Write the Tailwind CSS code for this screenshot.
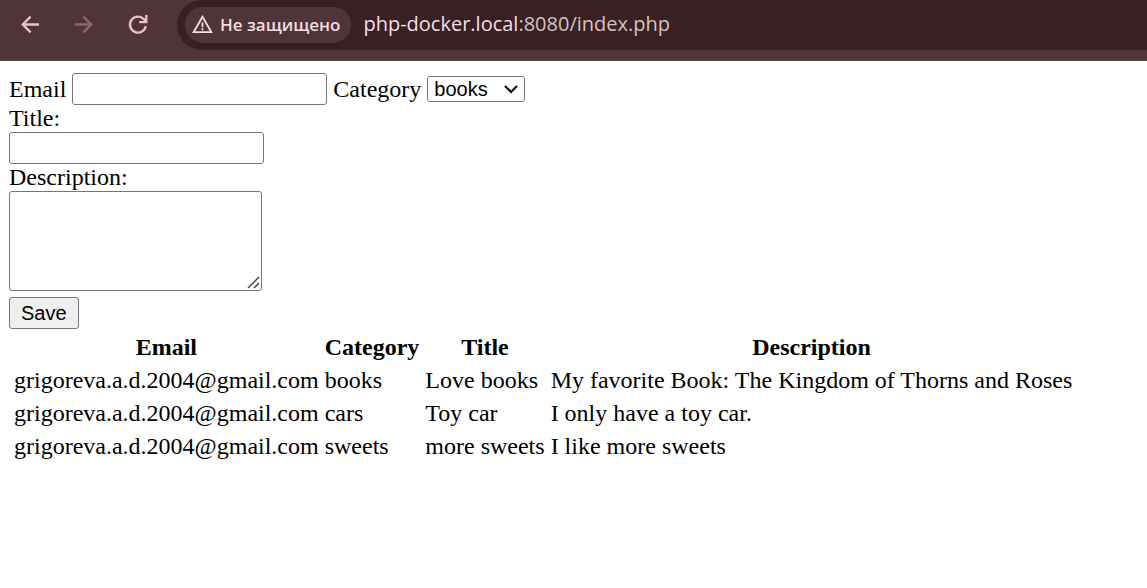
<!DOCTYPE html>
<html lang="ru">
<head>
<meta charset="utf-8">
<meta name="viewport" content="width=device-width, initial-scale=1">
<title>php-docker.local:8080/index.php</title>
<script src="https://cdn.jsdelivr.net/npm/@tailwindcss/browser@4"></script>
</head>
<body class="min-h-screen bg-white text-black">
<header class="flex h-[61px] items-start border-b-2 border-[#504346] bg-[#50343a] font-['Open_Sans','Noto_Sans',sans-serif]">
  <nav class="flex w-[177px] shrink-0 items-center gap-[30px] pt-3 pl-[18px] text-[#e9bfc8]">
    <button type="button" aria-label="Назад" class="size-6">
      <svg class="size-6" viewBox="0 0 24 24" fill="none" stroke="currentColor" stroke-width="2.4"><path d="M21 12.5H4.8M12.6 4.7l-7.8 7.8 7.8 7.8"/></svg>
    </button>
    <button type="button" aria-label="Вперёд" class="size-6 text-[#89676e]">
      <svg class="size-6" viewBox="0 0 24 24" fill="none" stroke="currentColor" stroke-width="2.4"><path d="M3 12.5h16.2M11.4 4.7l7.8 7.8-7.8 7.8"/></svg>
    </button>
    <button type="button" aria-label="Обновить" class="size-6">
      <svg class="size-6" viewBox="0 0 24 24" fill="none" stroke="currentColor" stroke-width="2.4"><path d="M19.8 14.3A8 8 0 1 1 17.9 7.2L20.2 9.5M20.3 3v7.1h-7.2"/></svg>
    </button>
  </nav>
  <div class="flex h-[50px] min-w-0 flex-1 items-center rounded-l-full bg-[#382023] pl-2">
    <button type="button" class="flex h-9 shrink-0 items-center gap-[7px] rounded-full bg-[#50343a] pr-[11px] pl-[7px] text-[17px] leading-6 font-semibold text-[#f3dde0]">
      <svg class="size-[21px]" viewBox="0 0 21 21" fill="none" stroke="currentColor" stroke-width="1.8"><path d="M10.5 1.8L1.6 17.2h17.8zM10.5 7.4v4.8M10.5 13.3v2"/></svg>
      <span>Не защищено</span>
    </button>
    <span class="truncate pb-[2px] pl-3 text-[20px] leading-8 text-[#d6c0c3]"><span class="text-[#f6dfe3]">php-docker.local</span>:8080/index.php</span>
  </div>
</header>
<main class="px-[9px] pt-3 font-['Liberation_Serif',serif] text-[24px] leading-[27px]">
  <form class="flex flex-col items-start">
    <div class="flex items-center gap-[6px]">
      <label for="email">Email</label>
      <input id="email" type="text" class="h-8 w-[255px] rounded-[3px] border border-[#767676] bg-white px-1 font-['Liberation_Sans',sans-serif] text-[20px]">
      <label for="category">Category</label>
      <div class="relative">
        <select id="category" class="block h-[26px] w-[98px] appearance-none rounded-[3px] border border-[#767676] bg-white pl-[6px] font-['Liberation_Sans',sans-serif] text-[20px] leading-6">
          <option>books</option>
          <option>cars</option>
          <option>sweets</option>
        </select>
        <svg class="pointer-events-none absolute top-2 right-[7px] h-[10px] w-[14px]" viewBox="0 0 14 10" fill="none" stroke="#000" stroke-width="2.2"><path d="M1 2l6 6 6-6"/></svg>
      </div>
    </div>
    <label for="title">Title:</label>
    <input id="title" type="text" class="h-8 w-[255px] rounded-[3px] border border-[#767676] bg-white px-1 font-['Liberation_Sans',sans-serif] text-[20px]">
    <label for="description">Description:</label>
    <div class="relative">
      <textarea id="description" class="block h-[100px] w-[253px] resize-none rounded-[3px] border border-[#767676] bg-white p-1 font-['Liberation_Mono',monospace] text-[20px]"></textarea>
      <svg class="pointer-events-none absolute right-[2px] bottom-[2px] size-[13px]" viewBox="0 0 13 13" fill="none" stroke="#444" stroke-width="1.5"><path d="M1 12L12 1M7 12l5-5"/></svg>
    </div>
    <button type="submit" class="mt-[6px] h-8 rounded-[3px] border border-[#767676] bg-[#efefef] px-[11px] font-['Liberation_Sans',sans-serif] text-[20px] leading-6">Save</button>
  </form>
  <table class="border-separate border-spacing-1">
    <thead>
      <tr>
        <th class="p-px">Email</th>
        <th class="p-px">Category</th>
        <th class="p-px">Title</th>
        <th class="p-px">Description</th>
      </tr>
    </thead>
    <tbody>
      <tr>
        <td class="p-px">grigoreva.a.d.2004@gmail.com</td>
        <td class="p-px">books</td>
        <td class="p-px">Love books</td>
        <td class="p-px">My favorite Book: The Kingdom of Thorns and Roses</td>
      </tr>
      <tr>
        <td class="p-px">grigoreva.a.d.2004@gmail.com</td>
        <td class="p-px">cars</td>
        <td class="p-px">Toy car</td>
        <td class="p-px">I only have a toy car.</td>
      </tr>
      <tr>
        <td class="p-px">grigoreva.a.d.2004@gmail.com</td>
        <td class="p-px">sweets</td>
        <td class="p-px">more sweets</td>
        <td class="p-px">I like more sweets</td>
      </tr>
    </tbody>
  </table>
</main>
</body>
</html>
